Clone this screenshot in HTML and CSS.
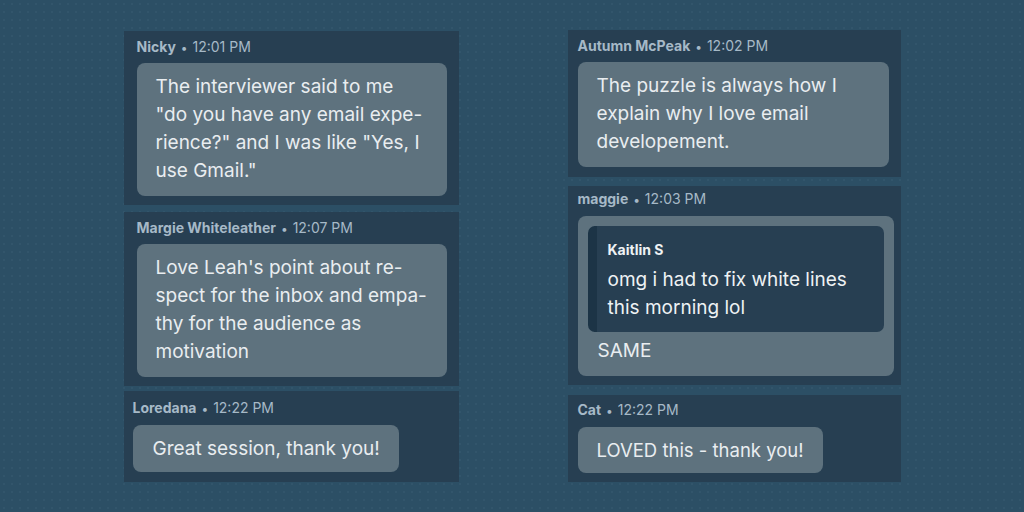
FILE: index.html
```html
<!DOCTYPE html>
<html lang="en">
<head>
<meta charset="utf-8">
<title>Chat highlights</title>
<link rel="stylesheet" href="styles.css">
</head>
<body>
<main class="board">
  <section class="column column--left">
    <article class="card card--first">
      <div class="meta"><span class="name">Nicky</span> <span class="dot">•</span> <span class="time">12:01 PM</span></div>
      <div class="bubble">The interviewer said to me<br>"do you have any email expe-<br>rience?" and I was like "Yes, I<br>use Gmail."</div>
    </article>
    <article class="card card--second">
      <div class="meta"><span class="name">Margie Whiteleather</span> <span class="dot">•</span> <span class="time">12:07 PM</span></div>
      <div class="bubble">Love Leah's point about re-<br>spect for the inbox and empa-<br>thy for the audience as<br>motivation</div>
    </article>
    <article class="card card--compact">
      <div class="meta"><span class="name">Loredana</span> <span class="dot">•</span> <span class="time">12:22 PM</span></div>
      <div class="bubble bubble--fit">Great session, thank you!</div>
    </article>
  </section>
  <section class="column column--right">
    <article class="card card--autumn">
      <div class="meta"><span class="name">Autumn McPeak</span> <span class="dot">•</span> <span class="time">12:02 PM</span></div>
      <div class="bubble">The puzzle is always how I<br>explain why I love email<br>developement.</div>
    </article>
    <article class="card card--quote">
      <div class="meta"><span class="name">maggie</span> <span class="dot">•</span> <span class="time">12:03 PM</span></div>
      <div class="bubble bubble--reply">
        <blockquote class="quote">
          <div class="quote-name">Kaitlin S</div>
          <div class="quote-text">omg i had to fix white lines<br>this morning lol</div>
        </blockquote>
        <div class="reply-text">SAME</div>
      </div>
    </article>
    <article class="card card--cat">
      <div class="meta"><span class="name">Cat</span> <span class="dot">•</span> <span class="time">12:22 PM</span></div>
      <div class="bubble bubble--fit">LOVED this - thank you!</div>
    </article>
  </section>
</main>
</body>
</html>
```

FILE: styles.css
```css
html, body {
  margin: 0;
  padding: 0;
}

body {
  width: 1024px;
  height: 512px;
  overflow: hidden;
  background-color: #2c4f65;
  background-image: radial-gradient(rgba(160, 200, 220, 0.05) 0.7px, transparent 1.1px);
  background-size: 8px 8px;
  font-family: Inter, "Noto Sans", "Liberation Sans", sans-serif;
}

.board {
  display: flex;
  justify-content: center;
  gap: 109px;
  padding-top: 30px;
}

.column {
  display: flex;
  flex-direction: column;
}

.column--left {
  width: 335px;
  margin-top: 1px;
  gap: 6px;
}

.column--right {
  width: 333px;
  gap: 9px;
}

.card {
  background-color: #273f52;
  padding: 7px 12px 9px 13px;
  display: flex;
  flex-direction: column;
  align-items: stretch;
}

.card--second {
  margin-top: 1px;
  padding-bottom: 9px;
}

.card--compact {
  margin-top: -1px;
  padding: 8px 10px 10px 9px;
  align-items: flex-start;
}

.card--autumn {
  padding: 7px 12px 10px 10px;
}

.card--quote {
  padding: 4px 7px 9px 10px;
}

.card--cat {
  margin-top: 1px;
  padding: 6px 10px 9px 10px;
  align-items: flex-start;
}

.meta {
  font-size: 14px;
  line-height: 18px;
  color: #a6b9c7;
  margin-bottom: 6px;
  white-space: nowrap;
}

.card--compact .meta,
.card--quote .meta,
.card--cat .meta {
  margin-bottom: 7px;
}

.name {
  font-weight: 700;
}

.dot {
  font-size: 12px;
  margin: 0 1px;
}

.time {
  font-weight: 400;
}

.bubble {
  background-color: #5e727e;
  border-radius: 8px;
  padding: 10px 20px 11px 19px;
  font-size: 19px;
  line-height: 28px;
  color: #e9edf0;
  white-space: nowrap;
}

.bubble--fit {
  padding: 10px 19px 9px 20px;
}

.card--cat .bubble {
  font-size: 18.5px;
  padding: 9px 19px 9px 19px;
}

.bubble--reply {
  padding: 10px 10px 11px 10px;
}

.quote {
  margin: 0;
  background-color: #273f52;
  border-left: 9px solid #1c3446;
  border-radius: 7px;
  padding: 15px 12px 10px 11px;
  color: #eef2f4;
}

.quote-name {
  font-size: 14px;
  line-height: 18px;
  font-weight: 700;
  margin-bottom: 7px;
}

.quote-text {
  font-size: 19px;
  line-height: 28px;
}

.reply-text {
  margin-top: 5px;
  padding-left: 10px;
}
```
